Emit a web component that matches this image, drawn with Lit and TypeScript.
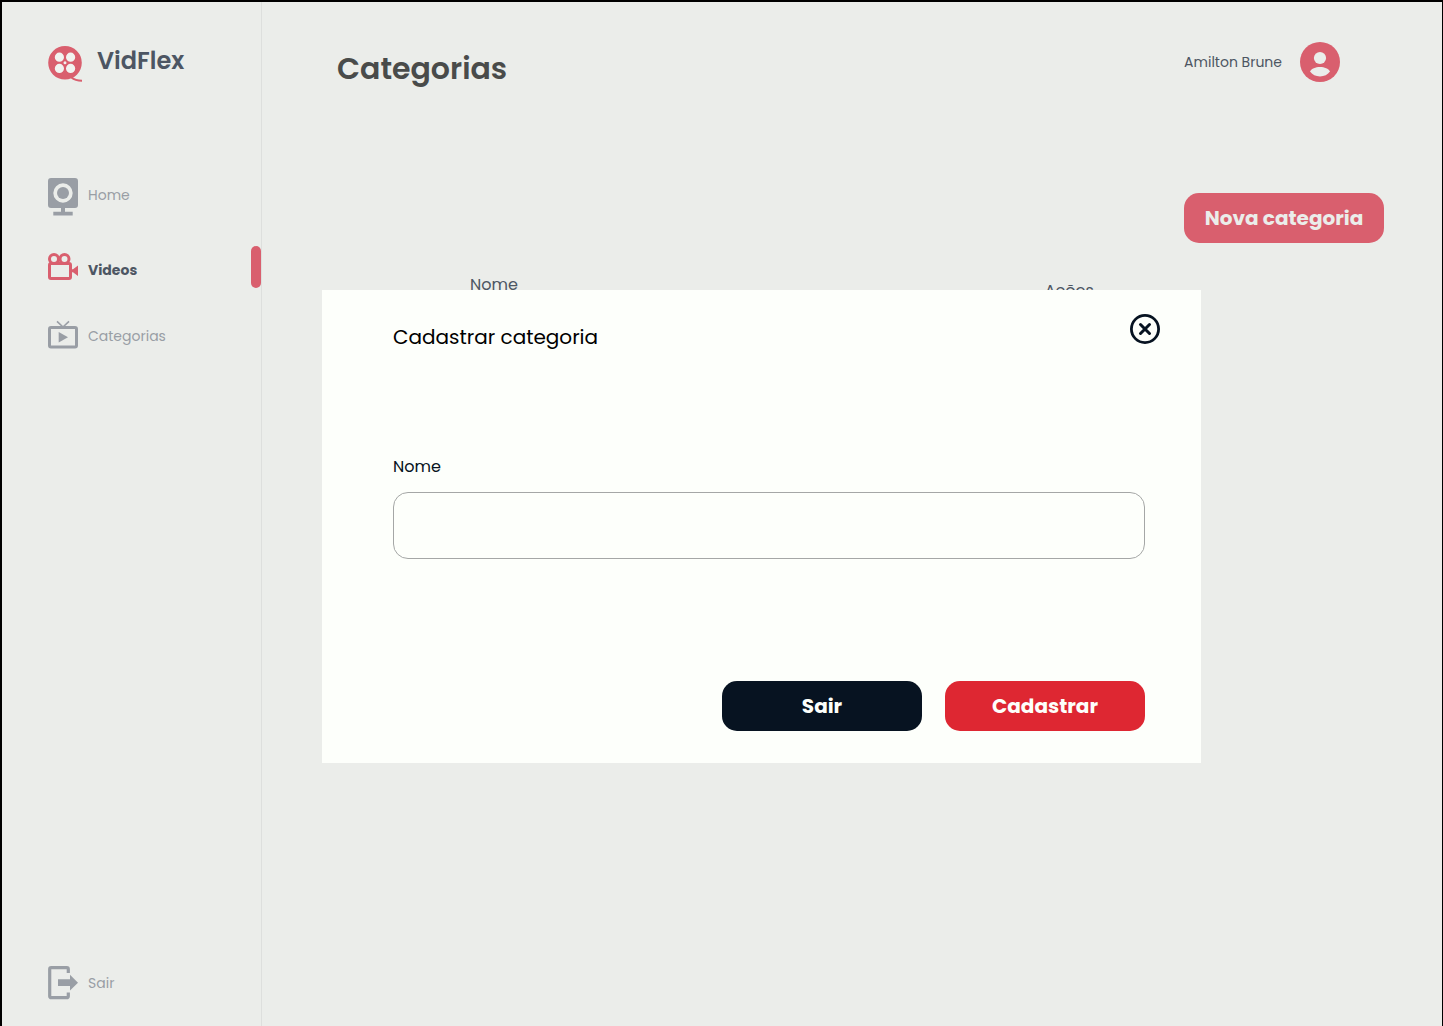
import { LitElement, html, css, svg } from "lit";
import { customElement, state } from "lit/decorators.js";

const reel = svg`<svg width="34" height="36" viewBox="0 0 34 36" aria-hidden="true">
  <circle cx="17" cy="17" r="14" fill="#f1f3f0"/>
  <path fill="#d95f6e" fill-rule="evenodd" d="M17 0a16.8 16.8 0 1 0 0 33.6A16.8 16.8 0 0 0 17 0ZM11.4 6.6a4.6 4.6 0 1 1 0 9.2 4.6 4.6 0 0 1 0-9.2Zm11.2 0a4.6 4.6 0 1 1 0 9.2 4.6 4.6 0 0 1 0-9.2ZM11.4 17.8a4.6 4.6 0 1 1 0 9.2 4.6 4.6 0 0 1 0-9.2Zm11.2 0a4.6 4.6 0 1 1 0 9.2 4.6 4.6 0 0 1 0-9.2ZM17 15.3a1.500 1.500 0 1 1 0 3 1.500 1.500 0 0 1 0-3Z"/>
  <path d="M23.500 31.500c2.500 2.200 6 3.200 10.500 3.200" fill="none" stroke="#d95f6e" stroke-width="2"/>
</svg>`;

const webcam = svg`<svg width="30" height="43" viewBox="0 0 30 43" fill="currentColor" aria-hidden="true">
  <path fill-rule="evenodd" d="M3 0h24a3 3 0 0 1 3 3v24a3 3 0 0 1-3 3H17v3.700h7.700v3.800H5.300v-3.800H13V30H3a3 3 0 0 1-3-3V3a3 3 0 0 1 3-3Zm12 5.300a9.700 9.700 0 1 0 0 19.400 9.700 9.700 0 0 0 0-19.400Z"/>
  <circle cx="15" cy="15" r="6"/>
</svg>`;

const camera = svg`<svg width="30" height="27" viewBox="0 0 30 27" aria-hidden="true">
  <g fill="none" stroke="#d95f6e" stroke-width="3">
    <circle cx="6" cy="6" r="4.500"/>
    <circle cx="16.500" cy="6" r="4.500"/>
    <rect x="1.500" y="10.500" width="21" height="15" rx="1.500"/>
  </g>
  <path fill="#d95f6e" d="M23 16.200h2l5-3.700v10.500l-5-3.700h-2z"/>
</svg>`;

const tv = svg`<svg width="30" height="30" viewBox="0 0 30 30" aria-hidden="true">
  <rect x="1.500" y="8.500" width="27" height="19.500" rx="1.500" fill="none" stroke="currentColor" stroke-width="3"/>
  <path d="m9 2.300 6 5.700 6-5.700" fill="none" stroke="currentColor" stroke-width="1.600"/>
  <path fill="currentColor" d="M10.700 13v10.600l9.300-5.300z"/>
</svg>`;

const exit = svg`<svg width="30" height="34" viewBox="0 0 30 34" aria-hidden="true">
  <path d="M20.300 7V3.200a1.500 1.500 0 0 0-1.500-1.500H3.200a1.500 1.500 0 0 0-1.500 1.500v27a1.500 1.500 0 0 0 1.500 1.500h15.600a1.500 1.500 0 0 0 1.500-1.500v-3.700" fill="none" stroke="currentColor" stroke-width="3.200"/>
  <path fill="currentColor" d="M10 13.300h12V8.800l8 7.900-8 7.900V20H10z"/>
</svg>`;

const avatar = svg`<svg width="40" height="40" viewBox="0 0 40 40" aria-hidden="true">
  <circle cx="20" cy="20" r="20" fill="#d95f6e"/>
  <circle cx="20" cy="16" r="6.100" fill="#ebedea"/>
  <path fill="#ebedea" d="M10 29.500c1.500-3 5.500-4.500 10-4.500s8.500 1.500 10 4.500c-2.200 3.200-5.800 4.900-10 4.900s-7.800-1.700-10-4.900Z"/>
</svg>`;

const close = svg`<svg width="30" height="30" viewBox="0 0 30 30" fill="none" stroke="#071321" aria-hidden="true">
  <circle cx="15" cy="15" r="13.600" stroke-width="2.800"/>
  <path d="m10.500 10.500 9 9m0-9-9 9" stroke-width="3" stroke-linecap="round"/>
</svg>`;

@customElement("app-root")
export class AppRoot extends LitElement {
  @state() private open = true;

  static styles = css`
    :host {
      display: block;
      font-family: Poppins, Inter, "Open Sans", sans-serif;
      color: #4d5663;
    }
    * {
      box-sizing: border-box;
    }
    svg {
      display: block;
      flex: none;
    }
    h1, h2 {
      margin: 0;
    }
    a {
      color: inherit;
      text-decoration: none;
    }
    button {
      border: 0;
      padding: 0;
      font: inherit;
      cursor: pointer;
    }
    .page {
      display: grid;
      grid-template-columns: 260px minmax(0, 1fr);
      min-height: 100vh;
      background: #ebedea;
      border: solid #000;
      border-width: 2px 1px 0 2px;
    }
    .sidebar {
      display: flex;
      flex-direction: column;
      padding: 44px 0 26px 46px;
      border-right: 1px solid #dddfdd;
    }
    .brand {
      display: flex;
      gap: 15px;
      font-size: 24px;
      font-weight: 600;
      line-height: 30px;
    }
    .nav {
      display: flex;
      flex-direction: column;
      flex: 1;
      gap: 32px;
      margin-top: 96px;
    }
    .link {
      display: flex;
      align-items: flex-start;
      gap: 10px;
      font-size: 14px;
      line-height: 34px;
      color: #999ea5;
    }
    .active {
      color: #4d5663;
      font-weight: 700;
    }
    .marker {
      width: 10px;
      height: 42px;
      margin: -7px 0 -1px auto;
      border-radius: 5px;
      background: #d95f6e;
    }
    .main {
      position: relative;
      padding-top: 39px;
    }
    .header {
      display: flex;
      justify-content: space-between;
      align-items: flex-start;
      padding: 0 102px 0 75px;
    }
    .title {
      font-size: 30px;
      font-weight: 600;
      line-height: 56px;
      color: #494b4a;
    }
    .user {
      display: flex;
      align-items: center;
      gap: 18px;
      font-size: 14px;
      line-height: 42px;
    }
    .toolbar {
      display: flex;
      justify-content: flex-end;
      padding: 96px 58px 30px;
    }
    .button {
      width: 200px;
      height: 50px;
      border-radius: 15px;
      font-size: 20px;
      font-weight: 700;
      color: #fdfffb;
      background: #de2732;
    }
    .muted {
      color: #ebedea;
      background: #d95f6e;
    }
    .dark {
      background: #071321;
    }
    .table-area {
      padding: 0 14px 0 208px;
    }
    table {
      width: 100%;
      table-layout: fixed;
      border-collapse: collapse;
      font-size: 16px;
      line-height: 24px;
    }
    th {
      height: 30px;
      padding: 0;
      font-weight: 400;
      text-align: left;
    }
    .col-name {
      width: 60%;
      vertical-align: top;
    }
    .col-actions {
      vertical-align: bottom;
    }
    .overlay {
      position: absolute;
      inset: 0;
      padding: 288px 241px 0 60px;
    }
    .dialog {
      background: #fdfffb;
      color: #071321;
    }
    .dialog-header {
      display: flex;
      justify-content: space-between;
      align-items: flex-start;
      padding: 24px 41px 0 71px;
    }
    .dialog-title {
      font-size: 20px;
      font-weight: 400;
      line-height: 46px;
      color: #000;
    }
    .close {
      background: none;
    }
    .form {
      display: flex;
      flex-direction: column;
      padding: 95px 56px 32px 71px;
    }
    .label {
      font-size: 16px;
      line-height: 24px;
    }
    .input {
      width: 100%;
      height: 67px;
      margin-top: 13px;
      padding: 0 20px;
      border: 1px solid #a5a7a6;
      border-radius: 15px;
      background: transparent;
      font: inherit;
      color: inherit;
    }
    .actions {
      display: flex;
      justify-content: flex-end;
      gap: 23px;
      margin-top: 122px;
    }
  `;

  private hide() {
    this.open = false;
  }

  private show() {
    this.open = true;
  }

  private submit(event: Event) {
    event.preventDefault();
    this.hide();
  }

  private renderDialog() {
    return html`
      <div class="overlay">
        <section class="dialog" role="dialog" aria-labelledby="dialog-title">
          <header class="dialog-header">
            <h2 class="dialog-title" id="dialog-title">Cadastrar categoria</h2>
            <button class="close" type="button" aria-label="Fechar" @click=${this.hide}>${close}</button>
          </header>
          <form class="form" @submit=${this.submit}>
            <label class="label" for="name">Nome</label>
            <input class="input" id="name" type="text" autocomplete="off" />
            <div class="actions">
              <button class="button dark" type="button" @click=${this.hide}>Sair</button>
              <button class="button" type="submit">Cadastrar</button>
            </div>
          </form>
        </section>
      </div>
    `;
  }

  render() {
    return html`
      <div class="page">
        <aside class="sidebar">
          <a class="brand" href="#">${reel}<span>VidFlex</span></a>
          <nav class="nav">
            <a class="link" href="#home">${webcam}<span>Home</span></a>
            <a class="link active" href="#videos" aria-current="page">
              ${camera}<span>Videos</span><span class="marker"></span>
            </a>
            <a class="link" href="#categorias">${tv}<span>Categorias</span></a>
          </nav>
          <a class="link" href="#sair">${exit}<span>Sair</span></a>
        </aside>
        <main class="main">
          <header class="header">
            <h1 class="title">Categorias</h1>
            <div class="user"><span>Amilton Brune</span>${avatar}</div>
          </header>
          <div class="toolbar">
            <button class="button muted" type="button" @click=${this.show}>Nova categoria</button>
          </div>
          <div class="table-area">
            <table>
              <thead>
                <tr>
                  <th class="col-name" scope="col">Nome</th>
                  <th class="col-actions" scope="col">Ações</th>
                </tr>
              </thead>
            </table>
          </div>
          ${this.open ? this.renderDialog() : null}
        </main>
      </div>
    `;
  }
}
